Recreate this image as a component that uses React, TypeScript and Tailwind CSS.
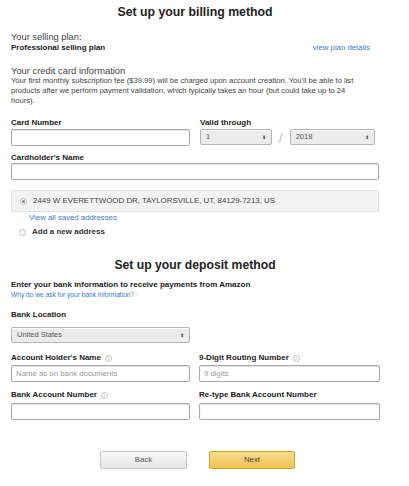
import React from 'react';

const font = { fontFamily: '"Liberation Sans", Arial, sans-serif' };

const Info = () => (
  <span className="ml-[4px] inline-flex h-[7px] w-[7px] items-center justify-center rounded-full border border-[#c4c4c4] text-[5px] leading-none text-[#c4c4c4]">
    i
  </span>
);

const Select = ({ value, className }: { value: string; className: string }) => (
  <div
    className={`flex h-[16px] items-center justify-between rounded-[2px] border border-[#b5b5b5] bg-[#ececec] px-[5px] text-[7.5px] text-[#555] shadow-[inset_0_1px_0_#fff] ${className}`}
  >
    <span>{value}</span>
    <span className="text-[5px] leading-none text-[#444]">⬍</span>
  </div>
);

const Input = ({ placeholder, className }: { placeholder?: string; className: string }) => (
  <div
    className={`flex h-[17px] items-center rounded-[2px] border border-[#a9a9a9] bg-white px-[4px] text-[7.8px] text-[#9a9a9a] shadow-[inset_0_1px_1px_rgba(0,0,0,0.12)] ${className}`}
  >
    {placeholder}
  </div>
);

const Label = ({ children }: { children: React.ReactNode }) => (
  <div className="flex items-center text-[8px] font-bold leading-[10px] text-[#222]">{children}</div>
);

const Radio = ({ checked }: { checked?: boolean }) => (
  <span className="flex h-[7px] w-[7px] items-center justify-center rounded-full border border-[#bbb] bg-white">
    {checked && <span className="h-[3px] w-[3px] rounded-full bg-[#888]" />}
  </span>
);

export default function App() {
  return (
    <div className="h-[486px] w-[409px] bg-white text-[#333]" style={font}>
      <div className="box-content w-[368px] pl-[11px]">
        <h1 className="pt-[4px] text-center text-[12.3px] font-bold leading-[16px] text-[#222]">
          Set up your billing method
        </h1>

        <div className="mt-[12px] text-[9.3px] leading-[11px] text-[#444]">Your selling plan:</div>
        <div className="flex items-center justify-between pr-[9px]">
          <span className="text-[8px] font-bold leading-[10px] text-[#222]">Professional selling plan</span>
          <span className="text-[7.8px] leading-[10px] text-[#3a7bc8]">view plan details</span>
        </div>

        <div className="mt-[12px] text-[9.4px] leading-[11px] text-[#444]">Your credit card information</div>
        <p className="w-[360px] text-[7.6px] leading-[10px] text-[#444]">
          Your first monthly subscription fee ($39.99) will be charged upon account creation. You'll be able to list
          products after we perform payment validation, which typically takes an hour (but could take up to 24
          hours).
        </p>

        <div className="mt-[12px] flex">
          <div className="w-[179px]">
            <Label>Card Number</Label>
            <Input className="mt-[1px] w-[179px]" />
          </div>
          <div className="ml-[10px]">
            <Label>Valid through</Label>
            <div className="mt-[1px] flex items-center">
              <Select value="1" className="w-[72px]" />
              <span className="mx-[7px] text-[13px] font-light leading-none text-[#bbb]">/</span>
              <Select value="2018" className="w-[85px]" />
            </div>
          </div>
        </div>

        <div className="mt-[7px]">
          <Label>Cardholder's Name</Label>
          <Input className="w-[368px]" />
        </div>

        <div className="mt-[10px] flex h-[22px] w-[368px] items-center rounded-[2px] border border-[#e4e4e4] bg-[#f3f3f3] pl-[8px]">
          <Radio checked />
          <span className="ml-[6px] text-[7.9px] text-[#444]">2449 W EVERETTWOOD DR, TAYLORSVILLE, UT, 84129-7213, US</span>
        </div>
        <div className="mt-[1px] pl-[18px] text-[7.8px] leading-[10px] text-[#3a7bc8]">View all saved addresses</div>
        <div className="mt-[4px] flex items-center pl-[8px]">
          <Radio />
          <span className="ml-[6px] text-[8px] font-bold leading-[10px] text-[#333]">Add a new address</span>
        </div>

        <h2 className="mt-[20px] text-center text-[12.2px] font-bold leading-[16px] text-[#222]">
          Set up your deposit method
        </h2>

        <div className="mt-[7px] text-[8px] font-bold leading-[10px] text-[#222]">
          Enter your bank information to receive payments from Amazon
        </div>
        <div className="text-[6.6px] leading-[10px] text-[#3a7bc8]">Why do we ask for your bank information? ·</div>

        <div className="mt-[10px]">
          <Label>Bank Location</Label>
          <Select value="United States" className="mt-[7px] w-[179px]" />
        </div>

        <div className="mt-[10px] grid grid-cols-[179px_181px] gap-x-[9px]">
          <div>
            <Label>
              Account Holder's Name <Info />
            </Label>
            <Input placeholder="Name as on bank documents" className="mt-[2px] w-[179px]" />
          </div>
          <div>
            <Label>
              9-Digit Routing Number <Info />
            </Label>
            <Input placeholder="9 digits" className="mt-[2px] w-[181px]" />
          </div>
          <div className="mt-[8px]">
            <Label>
              Bank Account Number <Info />
            </Label>
            <Input className="mt-[3px] w-[179px]" />
          </div>
          <div className="mt-[8px]">
            <Label>Re-type Bank Account Number</Label>
            <Input className="mt-[3px] w-[181px]" />
          </div>
        </div>

        <div className="ml-[89px] mt-[31px] flex gap-[22px]">
          <button
            type="button"
            className="h-[18px] w-[87px] rounded-[2px] border border-[#c8c8c8] bg-gradient-to-b from-[#f9f9f9] to-[#e6e6e6] text-[7.8px] text-[#555]"
            style={font}
          >
            Back
          </button>
          <button
            type="button"
            className="h-[18px] w-[86px] rounded-[2px] border border-[#c9a23a] bg-gradient-to-b from-[#f8dd8e] to-[#efc24b] text-[7.8px] text-[#444]"
            style={font}
          >
            Next
          </button>
        </div>
      </div>
    </div>
  );
}
